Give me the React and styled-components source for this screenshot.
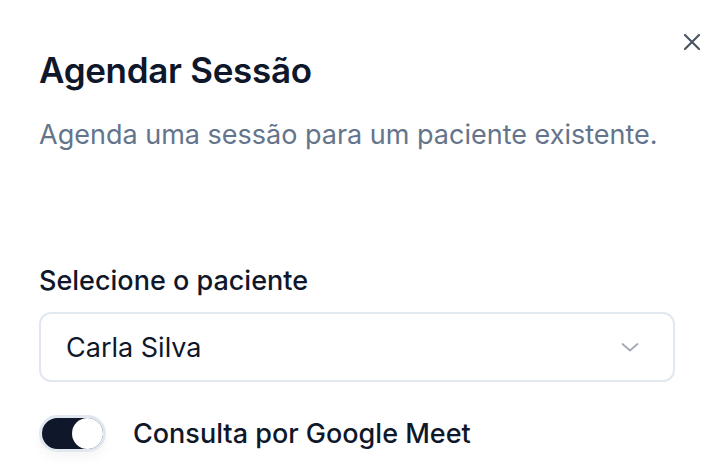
import React, { useState } from 'react'
import styled, { createGlobalStyle } from 'styled-components'

const Global = createGlobalStyle`
  * { box-sizing: border-box; }
  html, body { margin: 0; padding: 0; background: #ffffff; }
  body {
    font-family: Inter, "Noto Sans", "Liberation Sans", sans-serif;
    color: #0f172a;
    -webkit-font-smoothing: antialiased;
  }
`

const Dialog = styled.div`
  position: relative;
  width: 726px;
  height: 476px;
  padding: 47px 51px 0 39px;
  overflow: hidden;
  display: flex;
  flex-direction: column;
`

const Close = styled.button`
  position: absolute;
  top: 28px;
  right: 20px;
  width: 28px;
  height: 28px;
  padding: 0;
  border: none;
  background: none;
  color: #4b5563;
  display: flex;
  align-items: center;
  justify-content: center;
`

const Title = styled.h2`
  margin: 0;
  font-size: 35px;
  line-height: 46px;
  font-weight: 600;
  letter-spacing: -0.3px;
  color: #0f172a;
`

const Description = styled.p`
  margin: 23px 0 0;
  font-size: 27px;
  line-height: 38px;
  color: #64748b;
`

const Field = styled.div`
  margin-top: 109px;
  display: flex;
  flex-direction: column;
  gap: 13px;
`

const Label = styled.label`
  font-size: 27px;
  line-height: 36px;
  font-weight: 500;
  color: #0f172a;
`

const SelectBox = styled.button`
  width: 100%;
  height: 70px;
  padding: 0 31px 0 25px;
  border: 2px solid #e2e8f0;
  border-radius: 12px;
  background: #ffffff;
  display: flex;
  align-items: center;
  justify-content: space-between;
  font-family: inherit;
  font-size: 27px;
  color: #0f172a;
  text-align: left;
`

const Chevron = styled.span`
  color: #a0a8b6;
  display: flex;
`

const SwitchRow = styled.div`
  margin-top: 33px;
  display: flex;
  align-items: center;
  gap: 27px;
`

const Track = styled.button`
  width: 67px;
  height: 37px;
  padding: 0;
  border: 3px solid #e2e8f0;
  border-radius: 999px;
  background: ${p => (p.$on ? '#0f172a' : '#e2e8f0')};
  display: flex;
  align-items: center;
  justify-content: ${p => (p.$on ? 'flex-end' : 'flex-start')};
  box-shadow: 0 6px 10px rgba(15, 23, 42, 0.04);
`

const Thumb = styled.span`
  width: 31px;
  height: 31px;
  border-radius: 50%;
  background: #ffffff;
`

const SwitchLabel = styled.span`
  font-size: 27px;
  font-weight: 500;
  color: #0f172a;
`

export default function App() {
  const [on, setOn] = useState(true)
  return (
    <>
      <Global />
      <Dialog>
        <Close aria-label="Fechar">
          <svg width="26" height="26" viewBox="0 0 24 24" fill="none" stroke="currentColor" strokeWidth="2" strokeLinecap="round">
            <path d="M18.5 5.5 5.5 18.5M5.5 5.5l13 13" />
          </svg>
        </Close>
        <Title>Agendar Sessão</Title>
        <Description>Agenda uma sessão para um paciente existente.</Description>
        <Field>
          <Label>Selecione o paciente</Label>
          <SelectBox>
            <span>Carla Silva</span>
            <Chevron>
              <svg width="24" height="24" viewBox="0 0 24 24" fill="none" stroke="currentColor" strokeWidth="1.7" strokeLinecap="round" strokeLinejoin="round">
                <path d="m4.5 9 7.5 6.5 7.5-6.5" />
              </svg>
            </Chevron>
          </SelectBox>
        </Field>
        <SwitchRow>
          <Track $on={on} onClick={() => setOn(!on)}>
            <Thumb />
          </Track>
          <SwitchLabel>Consulta por Google Meet</SwitchLabel>
        </SwitchRow>
      </Dialog>
    </>
  )
}
